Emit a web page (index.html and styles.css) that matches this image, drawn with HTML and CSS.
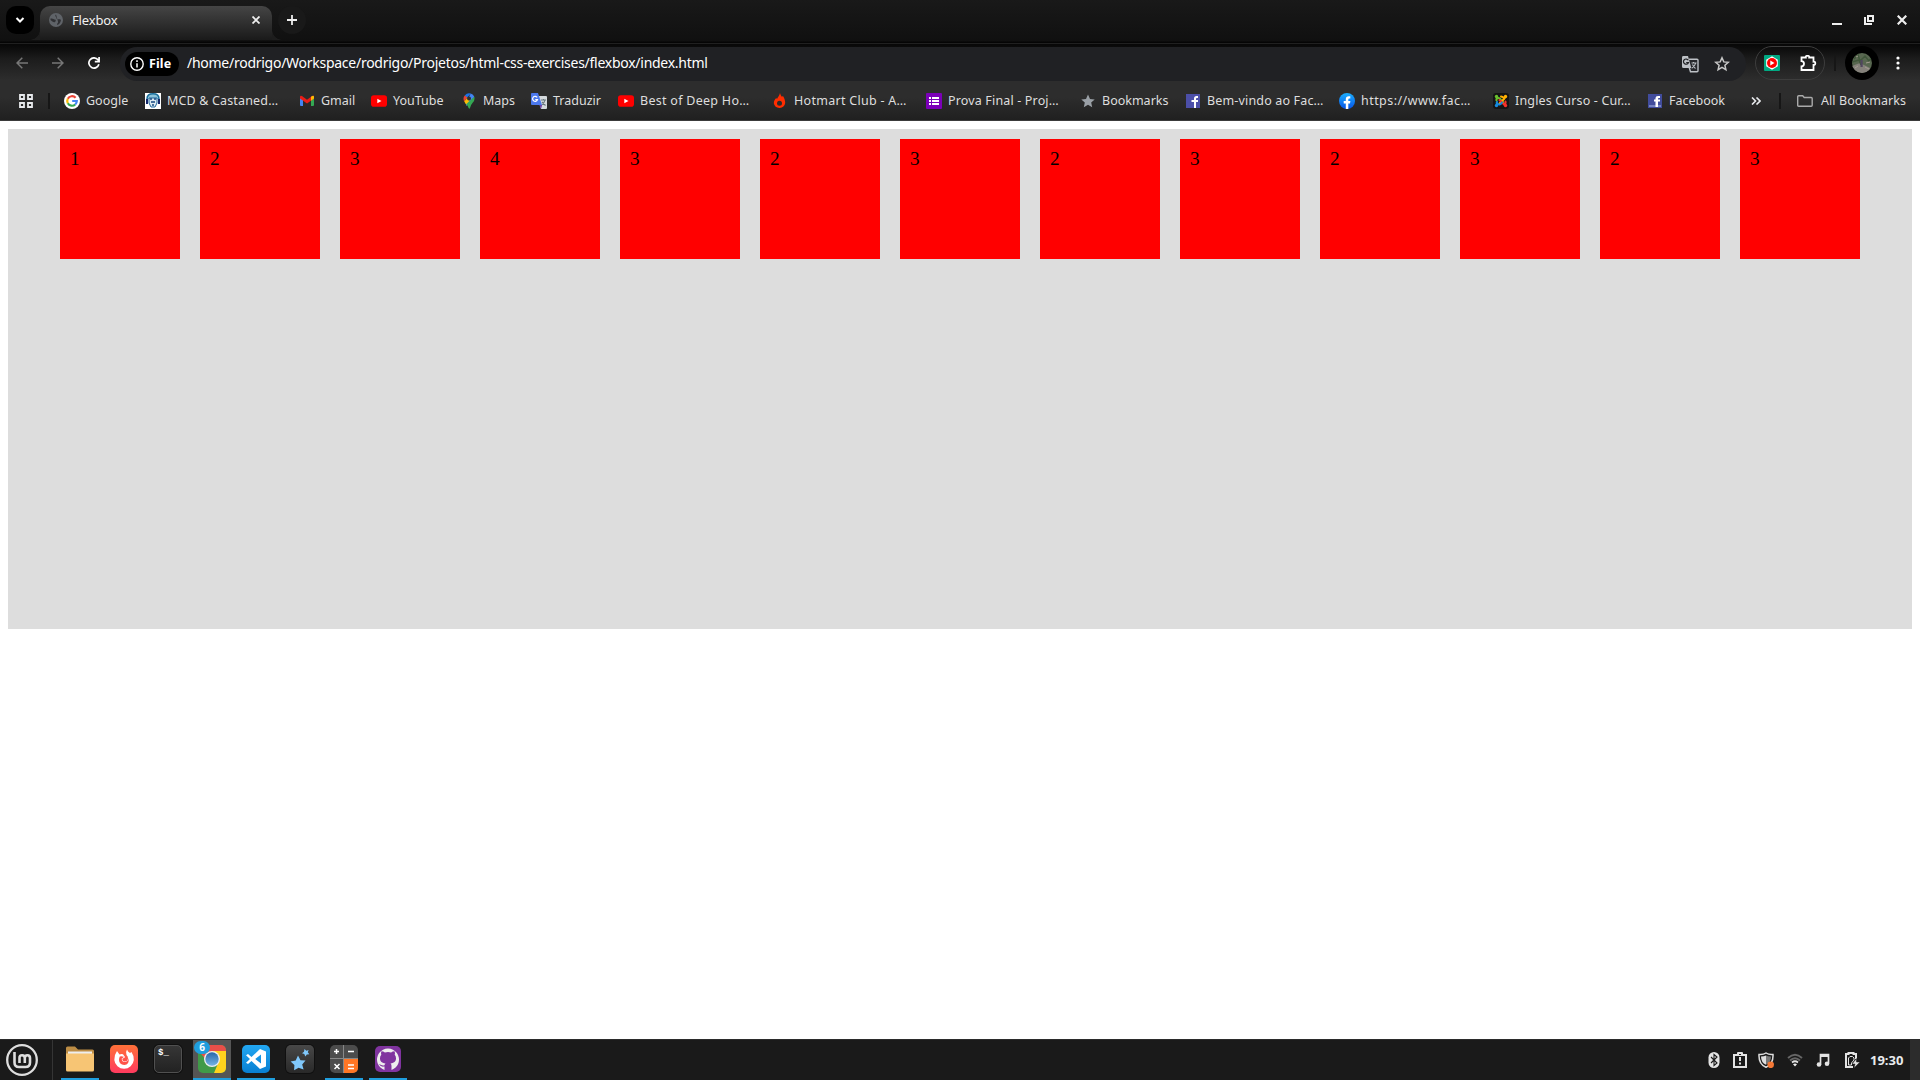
FILE: index.html
```html
<!DOCTYPE html>
<html lang="en">
<head>
<meta charset="utf-8">
<title>Flexbox</title>
<link rel="stylesheet" href="styles.css">
</head>
<body>
<div class="desktop">
  <header class="titlebar">
    <div class="tab-search"><svg width="10" height="8" viewBox="0 0 10 8"><path d="M1.500 2l3.500 3.500L8.500 2" fill="none" stroke="#fff" stroke-width="2"/></svg></div>
    <div class="tab">
      <svg width="14" height="14" viewBox="0 0 14 14"><circle cx="7" cy="7" r="7" fill="#5f6368"/><path d="M1.500 5.500C4 5 5 6.500 6 6.500s1 1.500 0 2.500-3-.5-4.500-2zM7 1.500C5 3 8 4 7.500 5.500c1 1.500 3 0 4.500 1.500-.5 3-2 4.500-4 5 0-2 1.500-2 1-3.500" fill="#303134"/></svg>
      <span class="tab-title">Flexbox</span>
      <svg width="8" height="8" viewBox="0 0 8 8"><path d="M.5.5l7 7M7.500.5l-7 7" stroke="#eee" stroke-width="1.800"/></svg>
    </div>
    <div class="new-tab"><svg width="10" height="10" viewBox="0 0 10 10"><path d="M5 0v10M0 5h10" stroke="#eee" stroke-width="1.800"/></svg></div>
    <div class="window-buttons">
      <svg width="10" height="10" viewBox="0 0 10 10"><path d="M0 9h10" stroke="#eee" stroke-width="2"/></svg>
      <svg width="10" height="10" viewBox="0 0 10 10"><path d="M4 1h5v5H4zM1 2v7h7" fill="none" stroke="#eee" stroke-width="2"/></svg>
      <svg width="10" height="10" viewBox="0 0 10 10"><path d="M.7.7l8.600 8.600M9.300.7L.7 9.300" stroke="#eee" stroke-width="2.200"/></svg>
    </div>
  </header>

  <div class="browser-chrome">
    <div class="toolbar">
      <div class="nav">
        <svg width="12" height="12" viewBox="0 0 12 12"><path d="M12 6H1M6.300.7L1 6l5.300 5.300" fill="none" stroke="#777" stroke-width="1.500"/></svg>
        <svg width="12" height="12" viewBox="0 0 12 12"><path d="M0 6h11M5.700.7L11 6l-5.300 5.300" fill="none" stroke="#777" stroke-width="1.500"/></svg>
        <svg width="12" height="12" viewBox="0 0 12 12"><path d="M10.900 7.300A5.100 5.100 0 1 1 10 2.800L11 4.200M11.100 0v4.600H6.800" fill="none" stroke="#fff" stroke-width="1.700"/></svg>
      </div>
      <div class="address">
        <div class="scheme"><svg width="14" height="14" viewBox="0 0 14 14"><circle cx="7" cy="7" r="6.200" fill="none" stroke="#fff" stroke-width="1.400"/><path d="M7 6.200v4.300M7 3.300v1.600" stroke="#fff" stroke-width="1.500"/></svg><b class="scheme-label">File</b></div>
        <span class="url">/home/rodrigo/Workspace/rodrigo/Projetos/html-css-exercises/flexbox/index.html</span>
        <svg width="18" height="18" viewBox="0 0 18 18"><path d="M8 4.200h8q1 0 1 1v10.600q0 1-1 1H9.500l-1.500-5" fill="#27282c" stroke="#bdc1c6" stroke-width="1.400"/><path d="M2 1h5l3.300 12H2.500A1.500 1.500 0 0 1 1 11.500v-9A1.500 1.500 0 0 1 2 1z" fill="#bdc1c6"/><path d="M7.300 5.300A2.600 2.600 0 1 0 7.500 7.500H5.200" fill="none" stroke="#202124" stroke-width="1.200"/><path d="M10.500 8h5M12.500 7v1.500M14.700 8c-.5 2.500-2 4-4 5.200M11.500 9.500c1 2 1.500 3 3 4" fill="none" stroke="#bdc1c6" stroke-width="1.100"/></svg>
        <svg width="16" height="16" viewBox="0 0 16 16"><path d="M8 1.800l1.800 4.100 4.500.4-3.400 3 1 4.300L8 11.300l-3.900 2.300 1-4.300-3.400-3 4.500-.4z" fill="none" stroke="#c7c7c7" stroke-width="1.500"/></svg>
      </div>
      <div class="extensions">
        <svg width="16" height="16" viewBox="0 0 16 16"><rect width="16" height="16" rx="1" fill="#00a982"/><path d="M8 1.300l5.800 3.400v6.600L8 14.700l-5.800-3.400V4.700z" fill="#fff"/><circle cx="8" cy="8" r="5" fill="#f00"/><path d="M6.300 5.500L10.500 8l-4.200 2.500z" fill="#fff"/></svg>
        <svg width="17" height="16" viewBox="0 0 17 16"><path d="M1.500 2.500h4.300q-.3-1.700 1.700-1.700t1.700 1.700h4.300v4.200q1.800-.2 1.800 1.600t-1.800 1.600V15h-12v-3.600q2.500-.3 2.500-2.600T1.500 6.200z" fill="none" stroke="#fff" stroke-width="1.800"/></svg>
      </div>
      <i class="divider"></i>
      <div class="profile"><svg width="20" height="20" viewBox="0 0 20 20"><defs><clipPath id="face"><circle cx="10" cy="10" r="10"/></clipPath></defs><g clip-path="url(#face)"><path fill="#586750" d="M0 0h20v20H0z"/><path fill="#85817b" d="M0 13l8-3 12 6v5H0z"/><path d="M2 6l4-4 2 6 5-5 4 5 3-4M0 9l7-2 2 5" fill="none" stroke="#40563a" stroke-width="1.500"/><path d="M8.500 7h2.200v7H8.500z" fill="#51475f"/><path d="M3 15l3-2M13 14l4 2M14 10l4-1M4 4l2-1" stroke="#a39d91"/></g></svg></div>
      <svg width="4" height="14" viewBox="0 0 4 14"><g fill="#fff"><circle cx="2" cy="2" r="1.600"/><circle cx="2" cy="7" r="1.600"/><circle cx="2" cy="12" r="1.600"/></g></svg>
    </div>

    <nav class="bookmarks">
      <svg width="14" height="14" viewBox="0 0 14 14"><path d="M1 1h4v4H1zM9 1h4v4H9zM1 9h4v4H1zM9 9h4v4H9z" fill="none" stroke="#e8eaed" stroke-width="1.800"/></svg>
      <i class="divider"></i>
      <ul class="links">
        <li><svg viewBox="0 0 16 16"><circle cx="8" cy="8" r="8" fill="#fff"/><g fill="none" stroke-width="2.200"><path d="M11.600 4.800A4.800 4.800 0 0 0 3.800 5.700" stroke="#ea4335"/><path d="M3.800 5.700a4.800 4.800 0 0 0 0 4.600" stroke="#fbbc05"/><path d="M3.800 10.300a4.800 4.800 0 0 0 7.400 1.200" stroke="#34a853"/><path d="M11.200 11.500A4.800 4.800 0 0 0 12.800 8H8.200" stroke="#4285f4"/></g></svg><span>Google</span></li>
        <li><svg viewBox="0 0 16 16"><path fill="#fff" d="M0 0h16v16H0z"/><path d="M2 6Q2 .8 8 .8T14 6" fill="#8bc2d9" stroke="#176d9b" stroke-width="1.500"/><path d="M4 5h8v5l-2 4H6l-2-4z" fill="#dce9f1" stroke="#1c659a"/><path d="M1 6h2v5H1zM13 6h2v5h-2z" fill="#14286b"/><path d="M5 6h2M9 6h2M6 9h4M7 12h2" stroke="#164a83" stroke-width="1.500"/></svg><span class="clipped">MCD &amp; Castaned…</span></li>
        <li><svg viewBox="0 0 16 16"><path d="M1 4h3v9H2q-1 0-1-1z" fill="#4285f4"/><path d="M12 4h3v8q0 1-1 1h-2z" fill="#34a853"/><path d="M1 4q0-2 2-1l5 3.700L13 3q2-1 2 1v1.500L8 10.600 1 5.500z" fill="#ea1d16"/><path d="M12 3.800q3-2.200 3 .2v1.500l-3 2.200z" fill="#fbbc04"/></svg><span>Gmail</span></li>
        <li><svg viewBox="0 0 16 16"><rect y="2.300" width="16" height="11.400" rx="2.800" fill="#f00"/><path d="M6.300 5.700l4.200 2.300-4.200 2.300z" fill="#fff"/></svg><span>YouTube</span></li>
        <li><svg viewBox="0 0 16 16"><path d="M3.800 2.500A5.500 5.500 0 0 1 9.800.4L5 6z" fill="#1a73e8"/><path d="M9.700.4q2.800.8 3.600 3.500L5.500 13l-.8-2.500z" fill="#4285f4"/><path d="M3.800 2.400L6.300 4.500 3.200 8.500Q1.500 5 3.800 2.400z" fill="#ea4335"/><path d="M3.200 8.500L7 4l1.500 4-3.300 3.500z" fill="#fbbc04"/><path d="M13.300 3.800q.8 3-1.300 5.500-2.400 2.800-3 5.700-.8 1.500-1.400 0Q7 13 5.200 11.200z" fill="#34a853"/><circle cx="8" cy="5.400" r="2" fill="#303030"/></svg><span>Maps</span></li>
        <li><svg viewBox="0 0 16 16"><path d="M6 3h9q1 0 1 1v11q0 1-1 1h-5z" fill="#d5dadd"/><path d="M1 0h6l4 12H1q-1 0-1-1V1q0-1 1-1z" fill="#4b78ed"/><path d="M8.500 12h2.700L10 16z" fill="#7040a8"/><path d="M6.200 4.400A2.500 2.500 0 1 0 6.500 6.500H4.300" fill="none" stroke="#fff" stroke-width="1.200"/><path d="M10 7h5M12.500 6v1M14 7c-.5 2.500-1.500 3.500-3 4.500M11 9l3.500 3.500" fill="none" stroke="#68777d" stroke-width="1.100"/></svg><span>Traduzir</span></li>
        <li><svg viewBox="0 0 16 16"><rect y="2.300" width="16" height="11.400" rx="2.800" fill="#f00"/><path d="M6.300 5.700l4.200 2.300-4.200 2.300z" fill="#fff"/></svg><span class="clipped wide">Best of Deep Ho…</span></li>
        <li><svg viewBox="0 0 16 16"><path d="M9 0c.5 2 1.200 3 2 3.800l1-.8c1.500 2.500 2.200 4.500 2.200 7A5.800 5.800 0 0 1 2.800 10.300C2.800 7.500 4 6.500 5.200 5l.8 1c1-2 2.400-3.300 3-6z" fill="#ff2d00"/><circle cx="8.500" cy="10.200" r="2.500" fill="#2b2b2b"/></svg><span class="clipped wide hotmart">Hotmart Club - A…</span></li>
        <li><svg viewBox="0 0 16 16"><rect width="16" height="16" rx="1" fill="#7b00b8"/><path d="M3 4h2v2H3zM3 7h2v2H3zM3 10h2v2H3zM6 4h7v2H6zM6 7h7v2H6zM6 10h7v2H6z" fill="#fff"/></svg><span class="clipped">Prova Final - Proj…</span></li>
        <li><svg viewBox="0 0 16 16"><path d="M8 1.500l2 4.400 4.700.5-3.500 3.200 1 4.700L8 11.800l-4.200 2.500 1-4.700L1.300 6.400 6 5.900z" fill="#9aa0a6"/></svg><span>Bookmarks</span></li>
        <li><svg viewBox="0 0 16 16"><path fill="#4c4fa8" d="M1 1h14v14H1z"/><path d="M9 15V9H6.500V7H9V5.500Q9 3 11.500 3H13v2h-1.200q-.8 0-.8 1v1h2v2h-2v6z" fill="#fff"/></svg><span class="clipped">Bem-vindo ao Fac…</span></li>
        <li><svg viewBox="0 0 16 16"><defs><linearGradient id="fb" x2="0" y2="1"><stop stop-color="#1aafff"/><stop offset="1" stop-color="#0753e7"/></linearGradient></defs><circle cx="8" cy="8" r="8" fill="url(#fb)"/><path d="M6.800 16v-5.500H4.700V8h2.100V6.300Q6.800 3.200 9.700 3.200h1.600v2.200h-1q-1 0-1 1.100V8h2.100l-.4 2.500H9.300V16z" fill="#fff"/></svg><span class="clipped link">https://www.fac…</span></li>
        <li><svg viewBox="0 0 16 16"><rect width="16" height="16" rx="3" fill="#151515"/><g fill="none" stroke-width="2" stroke-linecap="round"><path d="M3.500 7.500Q3 5.500 5 5t3 2l2.500 2.500" stroke="#6abf2e"/><path d="M8 3.500Q11 4 11 6L6.500 10.500M11 6l1.500-2" stroke="#ffb000"/><path d="M12.500 8.500Q13 11 11 11.500L6.500 7M11 11.500l1.500 1" stroke="#f5312b"/><path d="M3.500 12.500L5 11q2 1.500 4-1.500M4 9q-1 2 1 2" stroke="#1689dc"/></g><circle cx="3.500" cy="3.500" r="1.700" fill="#6abf2e"/><circle cx="12.500" cy="3.500" r="1.700" fill="#ffb000"/><circle cx="12.500" cy="12.500" r="1.700" fill="#f5312b"/><circle cx="3.500" cy="12.500" r="1.700" fill="#1689dc"/></svg><span class="clipped">Ingles Curso - Cur…</span></li>
        <li><svg viewBox="0 0 16 16"><path fill="#414c9c" d="M1 1h14v14H1z"/><path fill="#7583c2" d="M2 12h12v2H2z"/><path d="M8.500 14V8.500H7v-2h1.500V5Q8.500 3 11 3h2v2h-1.200q-.8 0-.8.7v.8h2v2h-2V14z" fill="#fff"/></svg><span>Facebook</span></li>
      </ul>
      <svg width="10" height="8" viewBox="0 0 10 8"><path d="M1 .5L4.500 4 1 7.500M5.500.5L9 4 5.500 7.500" fill="none" stroke="#e8eaed" stroke-width="1.600"/></svg>
      <i class="divider"></i>
      <div class="all"><svg width="16" height="12" viewBox="0 0 16 12"><path d="M1.700.8h4l1.500 1.700h7q1 0 1 1v6.700q0 1-1 1H1.700q-1 0-1-1V1.800q0-1 1-1z" fill="none" stroke="#aaa" stroke-width="1.400"/></svg><span>All Bookmarks</span></div>
    </nav>
  </div>

  <main class="page">
    <div class="flex-container">
      <div class="item">1</div>
      <div class="item">2</div>
      <div class="item">3</div>
      <div class="item">4</div>
      <div class="item">3</div>
      <div class="item">2</div>
      <div class="item">3</div>
      <div class="item">2</div>
      <div class="item">3</div>
      <div class="item">2</div>
      <div class="item">3</div>
      <div class="item">2</div>
      <div class="item">3</div>
    </div>
  </main>

  <footer class="taskbar">
    <div class="menu"><svg width="32" height="32" viewBox="0 0 32 32"><circle cx="16" cy="16" r="14.800" fill="none" stroke="#dedede" stroke-width="2.300"/><path d="M8.500 8v10.500Q8.500 23 13 23h6.500q4.500 0 4.500-4.500V14q0-2.800-2.600-2.800T18.800 14v5M18.800 14q0-2.800-2.700-2.800T13.500 14v5" fill="none" stroke="#dedede" stroke-width="2.600"/></svg></div>
    <div class="launchers">
      <div class="app open"><svg viewBox="0 0 28 28"><path d="M0 3q0-1.500 1.500-1.500H9l3 3h14.500Q28 4.500 28 6v4H0z" fill="#bd8d45"/><path d="M2 6.500h24v4H2z" fill="#eee"/><path d="M0 8.500h28v16.500q0 1.500-1.500 1.500h-25Q0 26.500 0 25z" fill="#f7c574"/></svg></div>
      <div class="app"><svg viewBox="0 0 28 28"><defs><linearGradient id="ff" x2="0" y2="1"><stop stop-color="#ff7139"/><stop offset="1" stop-color="#ff3a5e"/></linearGradient></defs><rect width="28" height="28" rx="5" fill="url(#ff)"/><path d="M7 6l2.500 3.500q1.500-.7 3.500-.3L15 12q-.5 1-2.500 1.500-.5 2.700 2 3 2.800 0 3.500-2.500.3-2.500-1.500-4-1.300-2.500.5-5.500.5 2 3 3.500l1.500-1q2.500 3.500 2.300 8A9.800 9.800 0 0 1 4.300 15Q4.300 9.500 7 6z" fill="#fff"/><path d="M9.800 11.500q1.500-.8 4 .2-.5 1.200-2 1.500-.3 3.500 2.700 3.700 3.500 0 4-4 1.300 6.500-4.300 7-5-.3-5.200-5 0-1.800.8-3.400z" fill="#ff5349"/></svg></div>
      <div class="app"><div class="dark-tile terminal">$_</div></div>
      <div class="app open active"><svg viewBox="0 0 28 28"><defs><clipPath id="sq"><rect width="28" height="28" rx="5"/></clipPath><linearGradient id="lens" x2="0" y2="1"><stop stop-color="#2867aa"/><stop offset="1" stop-color="#73b3e4"/></linearGradient></defs><g clip-path="url(#sq)"><path d="M0 0h28v28H0z" fill="#409a48"/><path d="M14 6h14v22H16l5-12z" fill="#ffd21d"/><path d="M0 0h28v6H14l-6 9L0 5z" fill="#e94f49"/></g><circle cx="14" cy="14" r="8" fill="#eee"/><circle cx="14" cy="14" r="6.700" fill="url(#lens)"/></svg><span class="count">6</span></div>
      <div class="app open"><svg viewBox="0 0 28 28"><defs><linearGradient id="vs" x2="0" y2="1"><stop stop-color="#22a7f2"/><stop offset="1" stop-color="#087fd2"/></linearGradient></defs><rect width="28" height="28" rx="5" fill="url(#vs)"/><path d="M18 4l6 2.500v15L18 24l-8.500-8L6 19l-2-1.200L8 14l-4-3.800L6 9l3.500 3zM19 9.500L13.200 14l5.800 4.500z" fill="#fff" fill-rule="evenodd"/></svg></div>
      <div class="app"><div class="dark-tile"><svg viewBox="0 0 28 28"><path d="M12 10.500l2.500 4.700 5 .2-3.300 4 1.400 5-5-1.700-4.500 2.500.3-5.200-3.800-3.500 5.100-1zM18.500 4l1.800 1.700 2.300-.7-.8 2.300 1.500 2-2.500.2-1.500 2-1-2.500-2.300-.7 2-1.600z" fill="#80c8fb"/></svg></div></div>
      <div class="app open"><svg viewBox="0 0 28 28"><defs><clipPath id="cc"><rect width="28" height="28" rx="5"/></clipPath></defs><g clip-path="url(#cc)"><path fill="#4c4c4c" d="M0 0h28v28H0z"/><path fill="#ff7624" d="M14 14h14v14H14z"/><path d="M13.500 0v28M0 13.500h28" stroke="#888"/></g><path d="M4 6.500h5M6.500 4v5M18 6.500h6M4.500 19l5 5M9.500 19l-5 5M18 20h6M18 23.500h6" stroke="#fff" stroke-width="1.500"/></svg></div>
      <div class="app open"><svg viewBox="0 0 28 28"><rect x="1" y="1" width="26" height="26" rx="5" fill="#80349f"/><path d="M10.500 25v-3.500c-4 .8-4-1.500-6-2.200 2.500-.5 3 2 6 .9q.2-1.200 1-1.800c-4.200-.5-5.500-2.500-5.500-5.200q0-2.200 1.300-3.500-.6-1.800.2-3.500 1.800 0 3.400 1.300 3.100-.8 6.200 0 1.600-1.300 3.400-1.300.8 1.700.2 3.500Q22 11 22 13.200c0 2.700-1.300 4.700-5.500 5.200q1 .8 1 2.500V25A11 11 0 1 0 10.500 25z" fill="#eee" fill-rule="evenodd"/></svg></div>
    </div>
    <div class="tray">
      <svg width="12" height="16" viewBox="0 0 12 16"><rect x=".5" width="11" height="16" rx="5.500" fill="#e3e3e3"/><path d="M3 5l6 6-3 2.500v-11L9 5l-6 6" fill="none" stroke="#1a1a1a" stroke-width="1.100"/></svg>
      <svg width="14" height="16" viewBox="0 0 14 16"><path d="M1 3h12v12H1z" fill="none" stroke="#e3e3e3" stroke-width="2"/><path d="M4 4V1q0-1 1-1h4q1 0 1 1v3z" fill="#e3e3e3"/><path d="M6 2h2v1H6z" fill="#1a1a1a"/><path d="M7 5v4M7 10.500v2" stroke="#e3e3e3" stroke-width="2"/></svg>
      <svg width="16" height="16" viewBox="0 0 16 16"><path d="M8 1q3 2 7 1.500Q15.500 12 8 15.300.500 12 1 2.500 5 3 8 1z" fill="none" stroke="#ddd" stroke-width="1.500"/><path d="M8 3.500v9.300Q3 10.500 3 4.500 6 4.500 8 3.500z" fill="#ddd"/><path d="M8 3.500v9.300Q13 10.500 13 4.500 10 4.500 8 3.500z" fill="#777"/><circle cx="12.700" cy="12.800" r="3.300" fill="#f47836"/></svg>
      <svg width="16" height="14" viewBox="0 0 16 14"><path d="M1 5Q8-1.500 15 5M3 7.500q5-4.500 10 0" fill="none" stroke="#666" stroke-width="1.900"/><path d="M5 9.500q3-2.500 6 0" fill="none" stroke="#e3e3e3" stroke-width="1.700"/><path d="M6 11.300q2-1.500 4 0L8 13.500z" fill="#eee"/></svg>
      <svg width="14" height="14" viewBox="0 0 14 14"><path d="M4.500 11.500V1.500h8v9" fill="none" stroke="#e3e3e3" stroke-width="1.700"/><path d="M4 1h9v3H4z" fill="#e3e3e3"/><circle cx="3" cy="11.500" r="2.300" fill="#e3e3e3"/><circle cx="11" cy="10.700" r="2.300" fill="#e3e3e3"/></svg>
      <svg width="15" height="16" viewBox="0 0 15 16"><path d="M8 15H1V2h2.500V1h5v1H11v5" fill="none" stroke="#e3e3e3" stroke-width="2"/><path d="M3.500 6L5 4.500h2.500L9 6v2l-2.500 3v2h-3z" fill="none" stroke="#e3e3e3"/><path d="M11.500 6.500L7 12h3l-1 4 6-6h-3.500z" fill="#e3e3e3" stroke="#1a1a1a" stroke-width=".5"/></svg>
      <b class="clock">19:30</b>
    </div>
    <div class="show-desktop"></div>
  </footer>
</div>
</body>
</html>
```
FILE: styles.css
```css
* { box-sizing: border-box; }
body { margin: 0; font-family: "Noto Sans", sans-serif; color: #e8eaed; background: #fff; }
svg { display: block; flex: none; }
.desktop { display: flex; flex-direction: column; height: 1080px; width: 1920px; overflow: hidden; }

.titlebar { display: flex; height: 45px; flex: none; padding: 6px 8px 0 6px; background: linear-gradient(#191919, #101010 41px, #050505 42px, #050505 43px, #202020 43px, #202020 44px, #080808 44px); }
.tab-search { width: 28px; height: 28px; border-radius: 10px; background: #000; display: grid; place-items: center; margin-right: 6px; }
.tab { position: relative; width: 232px; height: 34px; border-radius: 10px 10px 0 0; background: linear-gradient(#454545, #1a1a1a); display: flex; align-items: center; padding: 0 12px 6px 9px; }
.tab::before, .tab::after { content: ""; position: absolute; bottom: 0; width: 10px; height: 10px; }
.tab::before { left: -10px; background: radial-gradient(circle at 0 0, transparent 9.500px, #1d1d1d 10px); }
.tab::after { right: -10px; background: radial-gradient(circle at 100% 0, transparent 9.500px, #1d1d1d 10px); }
.tab-title { margin-left: 9px; flex: 1; font-size: 13px; letter-spacing: -.15px; line-height: 18px; color: #f1f1f1; }
.new-tab { width: 28px; height: 28px; margin-left: 6px; border-radius: 50%; background: #191919; display: grid; place-items: center; }
.window-buttons { display: flex; gap: 22px; margin: 9px 5px 0 auto; }
.window-buttons svg:nth-child(2) { margin-right: 1px; }

.browser-chrome { height: 76px; flex: none; background: linear-gradient(#080808, #1c1c1c 14px, #2d2d2d 35px, #2d2d2d 52px, #202020 75px, #3b3b3b 75px); }
.toolbar { display: flex; height: 36px; align-items: center; padding: 0 20px 0 16px; }
.nav { display: flex; gap: 24px; width: 104px; }
.address { display: flex; align-items: center; width: 1626px; height: 34px; margin-top: 1px; border-radius: 17px; background: #202124; padding: 0 16px 0 5px; }
.scheme { display: flex; align-items: center; width: 54px; height: 24px; padding-left: 5px; gap: 5px; border-radius: 12px; background: #000; color: #fff; }
.scheme-label { font-size: 12.500px; line-height: 16px; letter-spacing: .1px; }
.url { flex: 1; margin: 0 0 2px 8px; font-size: 14px; line-height: 20px; letter-spacing: -.265px; color: #fff; white-space: nowrap; }
.address svg + svg { margin-left: 15px; }
.extensions { display: flex; align-items: center; gap: 20px; width: 70px; height: 34px; margin-left: 9px; padding-left: 8px; border: 1px solid #3d3d3d; border-radius: 17px; }
.divider { width: 2px; height: 16px; background: #161616; flex: none; }
.extensions + .divider { margin-left: 9px; }
.profile { display: grid; place-items: center; width: 34px; height: 34px; margin: 0 17px 0 9px; border-radius: 50%; background: #000; }
.nav, .address, .extensions, .profile { flex-shrink: 0; }
.bookmarks { display: flex; height: 39px; align-items: center; padding-left: 19px; font-size: 12.500px; line-height: 18px; color: #dedede; }
.bookmarks > .divider { margin-left: 15px; }
.links { display: grid; grid-template-columns: 81px 154px 72px 90px 70px 87px 153px 155px 154px 105px 154px 154px 154px 104px; margin: 0 0 0 14px; padding: 0; list-style: none; }
.links li { display: flex; align-items: center; gap: 6px; white-space: nowrap; }
.links svg { width: 16px; height: 16px; }
.links .clipped { letter-spacing: .16px; }
.links .wide { letter-spacing: .28px; }
.links .link { letter-spacing: .45px; }
.links .hotmart { margin-left: 1px; }
.bookmarks > .divider:nth-of-type(2) { margin-left: 18px; }
.all { display: flex; align-items: center; gap: 8px; margin-left: 16px; white-space: nowrap; letter-spacing: .08px; }

.page { flex: 1; padding: 8px; background: #fff; }
.flex-container { display: flex; justify-content: center; align-items: flex-start; height: 500px; background: #ddd; }
.item { width: 120px; height: 120px; margin: 10px; padding: 10px; background: #f00; color: #000; font: 19.200px/19px "Liberation Serif", serif; }

.taskbar { display: flex; height: 41px; flex: none; background: #1a1a1a; border-top: 1px solid #2b2b2b; }
.menu { width: 53px; padding: 4px 0 0 6px; border-right: 1px solid #353535; }
.launchers { display: flex; gap: 6px; margin-left: 8px; }
.app { position: relative; width: 38px; height: 40px; padding: 5px; }
.app svg { width: 28px; height: 28px; }
.open { border-bottom: 2px solid #1f9ede; }
.active { background: #555; }
.dark-tile { width: 28px; height: 28px; border-radius: 5px; background: linear-gradient(#484848, #292929); box-shadow: 0 0 0 1px #101010; }
.terminal { background: linear-gradient(#363636, #222); border: 1px solid #505050; padding: 2px 3px; color: #fff; font: bold 9px/10px "Liberation Mono", monospace; }
.count { position: absolute; left: 1px; top: 1px; width: 16px; height: 13px; border-radius: 7px; background: #1f9ede; color: #fff; font-size: 10px; font-weight: bold; line-height: 13px; text-align: center; }
.tray { display: flex; align-items: center; margin-left: auto; }
.tray svg:nth-child(2) { margin-left: 13px; }
.tray svg:nth-child(3) { margin-left: 11px; }
.tray svg:nth-child(4) { margin-left: 13px; }
.tray svg:nth-child(5) { margin-left: 13px; }
.tray svg:nth-child(6) { margin-left: 15px; }
.clock { width: 40px; margin-left: 10px; font-size: 13px; line-height: 18px; white-space: nowrap; }
.show-desktop { width: 10px; background: #2c2c2c; }
```
